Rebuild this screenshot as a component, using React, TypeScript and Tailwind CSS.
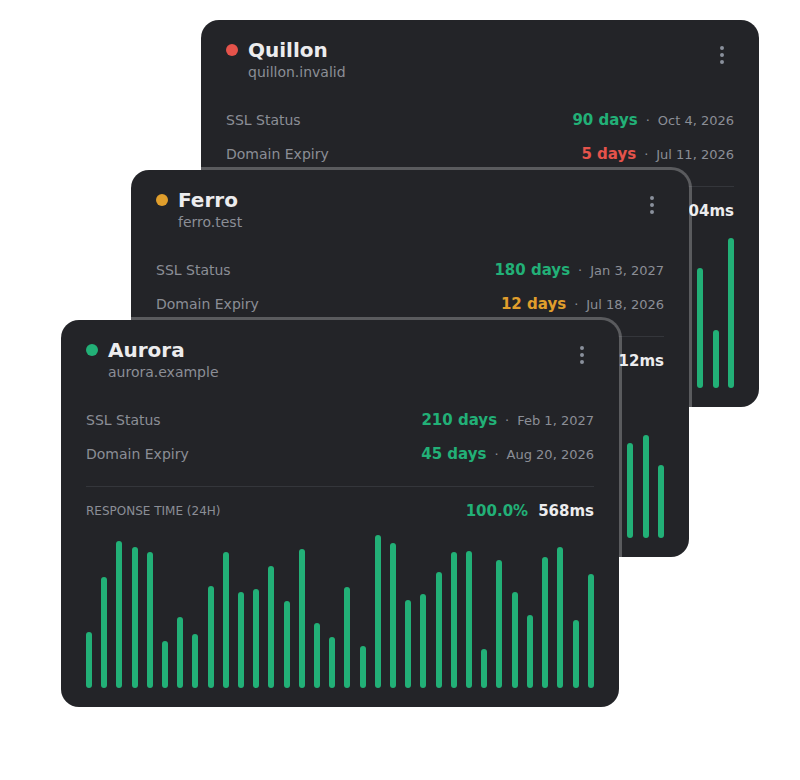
import React from 'react';
import { EllipsisVertical } from 'lucide-react';

type Tone = 'green' | 'amber' | 'red';

interface Monitor {
  name: string;
  host: string;
  status: Tone;
  ssl: { days: number; tone: Tone; date: string };
  domain: { days: number; tone: Tone; date: string };
  uptime: string;
  latency: string;
  bars: number[];
  left: number;
  top: number;
}

const dotColor: Record<Tone, string> = {
  green: 'bg-[#22b077]',
  amber: 'bg-[#e09e2c]',
  red: 'bg-[#e5534b]',
};

const textColor: Record<Tone, string> = {
  green: 'text-[#22b077]',
  amber: 'text-[#e09e2c]',
  red: 'text-[#e5534b]',
};

const monitors: Monitor[] = [
  {
    name: 'Quillon',
    host: 'quillon.invalid',
    status: 'red',
    ssl: { days: 90, tone: 'green', date: 'Oct 4, 2026' },
    domain: { days: 5, tone: 'red', date: 'Jul 11, 2026' },
    uptime: '98.9%',
    latency: '304ms',
    bars: [80, 120, 60, 140, 100, 90, 50, 130, 110, 70, 145, 60, 95, 85, 120, 40, 75, 140, 100, 55, 130, 90, 115, 65, 150, 80, 60, 125, 95, 70, 110, 120, 58, 150],
    left: 201,
    top: 20,
  },
  {
    name: 'Ferro',
    host: 'ferro.test',
    status: 'amber',
    ssl: { days: 180, tone: 'green', date: 'Jan 3, 2027' },
    domain: { days: 12, tone: 'amber', date: 'Jul 18, 2026' },
    uptime: '99.6%',
    latency: '212ms',
    bars: [60, 110, 140, 90, 70, 125, 50, 100, 135, 80, 60, 115, 145, 70, 95, 120, 45, 105, 130, 85, 65, 140, 100, 55, 120, 90, 150, 75, 110, 60, 130, 95, 103, 73],
    left: 131,
    top: 170,
  },
  {
    name: 'Aurora',
    host: 'aurora.example',
    status: 'green',
    ssl: { days: 210, tone: 'green', date: 'Feb 1, 2027' },
    domain: { days: 45, tone: 'green', date: 'Aug 20, 2026' },
    uptime: '100.0%',
    latency: '568ms',
    bars: [56, 111, 147, 141, 136, 47, 71, 54, 102, 136, 96, 99, 122, 87, 139, 65, 51, 101, 42, 153, 145, 88, 94, 116, 136, 137, 39, 128, 96, 73, 131, 141, 68, 114],
    left: 61,
    top: 320,
  },
];

const ExpiryRow: React.FC<{ label: string; days: number; tone: Tone; date: string }> = ({ label, days, tone, date }) => (
  <div className="flex h-[34px] items-center justify-between">
    <span className="text-[14px] text-[#8b8e96]">{label}</span>
    <div className="flex items-baseline gap-2">
      <span className={`text-[15px] font-bold ${textColor[tone]}`}>{days} days</span>
      <span className="text-[13px] text-[#8b8e96]">·</span>
      <span className="text-[13px] text-[#8b8e96]">{date}</span>
    </div>
  </div>
);

const MonitorCard: React.FC<{ m: Monitor }> = ({ m }) => (
  <div
    className="absolute flex h-[387px] w-[558px] flex-col rounded-[18px] bg-[#232428] px-[25px] pt-[17px] pb-[19px] ring-[3px] ring-white/25"
    style={{ left: m.left, top: m.top }}
  >
    {/* header */}
    <div className="flex items-start justify-between">
      <div>
        <div className="flex items-center gap-[10px]">
          <span className={`h-3 w-3 rounded-full ${dotColor[m.status]}`} />
          <span className="text-[20px] leading-[26px] font-bold text-[#ececee]">{m.name}</span>
        </div>
        <div className="ml-[22px] text-[14px] leading-[18px] text-[#8b8e96]">{m.host}</div>
      </div>
      <button className="mt-[6px] flex h-6 w-6 items-center justify-center text-[#8a909c]">
        <EllipsisVertical size={24} strokeWidth={2} />
      </button>
    </div>

    {/* certificates and domain */}
    <div className="mt-[22px]">
      <ExpiryRow label="SSL Status" {...m.ssl} />
      <ExpiryRow label="Domain Expiry" {...m.domain} />
    </div>

    <div className="mt-[15px] border-t border-[#34363b]" />

    {/* response time */}
    <div className="mt-[13px] flex h-[22px] items-center justify-between">
      <span className="text-[12px] text-[#8b8e96]">RESPONSE TIME (24H)</span>
      <div className="flex items-baseline gap-[10px]">
        <span className="text-[15px] font-bold text-[#22b077]">{m.uptime}</span>
        <span className="text-[15px] font-bold text-[#ececee]">{m.latency}</span>
      </div>
    </div>

    <div className="mt-[6px] flex h-[160px] items-end justify-between px-[0px]">
      {m.bars.map((h, i) => (
        <div key={i} className="w-[6px] rounded-full bg-[#22b077]" style={{ height: h }} />
      ))}
    </div>
  </div>
);

export default function App() {
  return (
    <div className="relative h-[780px] w-[800px] bg-white" style={{ fontFamily: '"DejaVu Sans", sans-serif' }}>
      {monitors.map((m) => (
        <MonitorCard key={m.name} m={m} />
      ))}
    </div>
  );
}
